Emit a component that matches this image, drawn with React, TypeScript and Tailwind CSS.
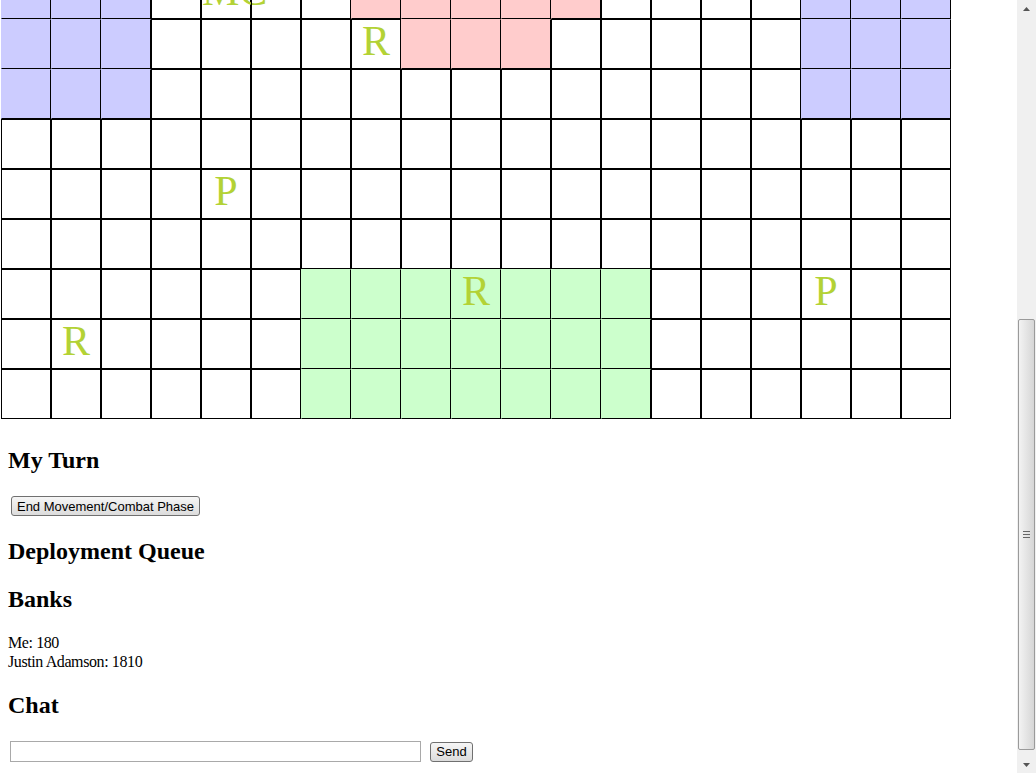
const COLS = 19;
const ROWS = 9;

type Zone = "white" | "blue" | "pink" | "green";

const zoneClass: Record<Zone, string> = {
  white: "border-black",
  blue: "bg-[#ccccff] border-l-[#ccccff] border-t-[#ccccff] border-r-black border-b-black",
  pink: "bg-[#ffcccc] border-l-[#ffcccc] border-t-[#ffcccc] border-r-black border-b-black",
  green: "bg-[#ccffcc] border-l-[#ccffcc] border-t-[#ccffcc] border-r-black border-b-black",
};

const pieces: Record<string, string> = {
  "0-4": "MC",
  "1-7": "R",
  "4-4": "P",
  "6-9": "R",
  "6-16": "P",
  "7-1": "R",
};

const zoneAt = (r: number, c: number): Zone => {
  if (r <= 2 && (c <= 2 || c >= 16)) return "blue";
  if ((r === 0 && c >= 7 && c <= 11) || (r === 1 && c >= 8 && c <= 10)) return "pink";
  if (r >= 6 && c >= 6 && c <= 12) return "green";
  return "white";
};

const Board = () => {
  const cells = [];
  for (let r = 0; r < ROWS; r++) {
    for (let c = 0; c < COLS; c++) {
      cells.push(
        <div
          key={`${r}-${c}`}
          className={`box-border h-[50px] w-[50px] border text-center whitespace-nowrap text-[42px] leading-[42px] text-[#b3d235] ${zoneClass[zoneAt(r, c)]}`}
        >
          {pieces[`${r}-${c}`] ?? ""}
        </div>
      );
    }
  }
  return (
    <div className="h-[420px] overflow-hidden">
      <div className="ml-px -mt-[31px] grid w-max grid-cols-[repeat(19,50px)]">
        {cells}
      </div>
    </div>
  );
};

const WinButton = ({ label, className }: { label: string; className: string }) => (
  <button
    className={`box-border rounded-[3px] border border-[#707070] bg-linear-to-b from-[#f6f6f6] to-[#dcdcdc] text-center text-[13px] leading-none text-black [font-family:'Liberation_Sans',Arial,sans-serif] ${className}`}
  >
    {label}
  </button>
);

const Scrollbar = () => (
  <div className="flex h-full w-[19px] shrink-0 flex-col bg-[#f0f0f0]">
    <div className="flex h-[17px] items-center justify-center">
      <svg width="7" height="4" viewBox="0 0 7 4">
        <polygon points="3.5,0 7,4 0,4" fill="#555" />
      </svg>
    </div>
    <div className="flex-1" />
    <div className="mx-auto flex h-[431px] w-[17px] items-center justify-center rounded-[2px] border border-[#9a9a9a] bg-linear-to-r from-[#f3f3f3] to-[#d6d6d6]">
      <div className="flex flex-col gap-[2px]">
        <div className="h-px w-[7px] bg-[#666]" />
        <div className="h-px w-[7px] bg-[#666]" />
        <div className="h-px w-[7px] bg-[#666]" />
      </div>
    </div>
    <div className="h-[6px]" />
    <div className="flex h-[17px] items-center justify-center">
      <svg width="7" height="4" viewBox="0 0 7 4">
        <polygon points="0,0 7,0 3.5,4" fill="#555" />
      </svg>
    </div>
  </div>
);

export default function App() {
  return (
    <div className="flex h-[773px] w-full overflow-hidden bg-white text-black [font-family:'Liberation_Serif','Times_New_Roman',serif]">
      <div className="min-w-0 flex-1">
        <Board />
        <div className="px-2">
          <h2 className="mt-[26px] text-[24px] font-bold leading-[28px]">My Turn</h2>
          <WinButton label="End Movement/Combat Phase" className="mt-[22px] ml-[3px] block h-[20px] w-[189px]" />
          <h2 className="mt-[21px] text-[24px] font-bold leading-[28px]">Deployment Queue</h2>
          <h2 className="mt-[20px] text-[24px] font-bold leading-[28px]">Banks</h2>
          <div className="mt-[20px] text-[16px] leading-[19px] tracking-[-0.4px]">
            <div>Me: 180</div>
            <div>Justin Adamson: 1810</div>
          </div>
          <h2 className="mt-[20px] text-[24px] font-bold leading-[28px]">Chat</h2>
          <div className="mt-[22px] flex items-center gap-[9px]">
            <input
              type="text"
              className="ml-[2px] box-border h-[21px] w-[411px] border border-[#a9a9a9] bg-white px-1 text-[13px] outline-none"
            />
            <WinButton label="Send" className="h-[20px] w-[43px]" />
          </div>
        </div>
      </div>
      <Scrollbar />
    </div>
  );
}
